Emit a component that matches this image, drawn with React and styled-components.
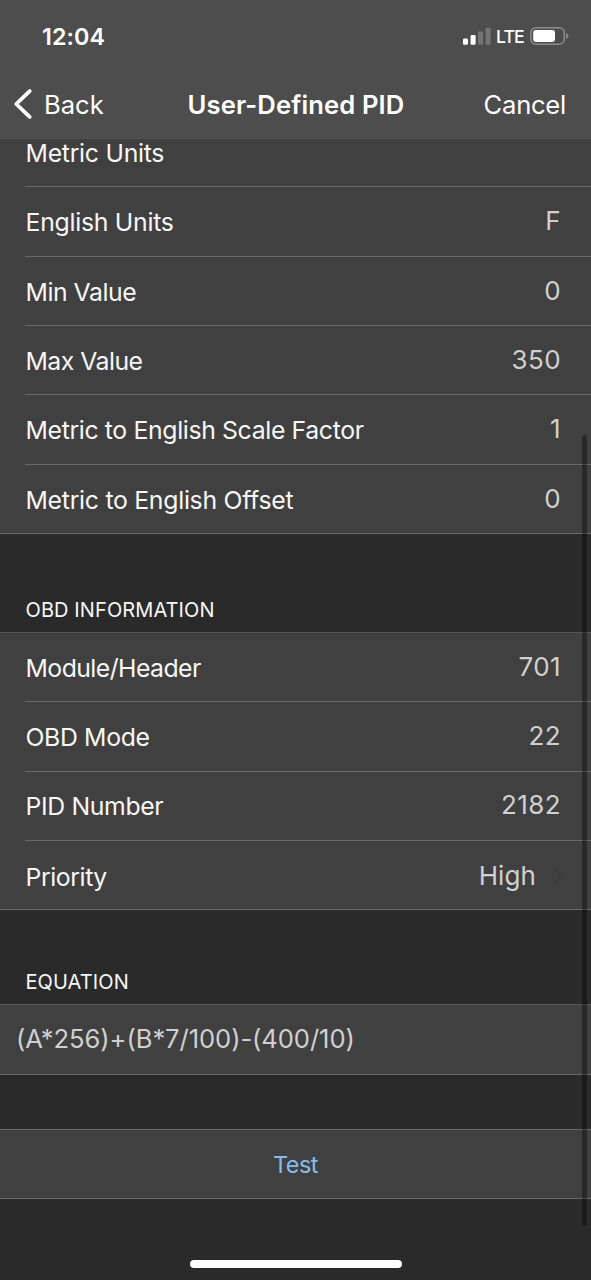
import React from "react";
import styled, { createGlobalStyle } from "styled-components";

const theme = {
    header: "#4d4d4d",
    page: "#2a2a2a",
    row: "#404040",
    line: "#6a6a6a",
    groupLine: "#585858",
    text: "#f7f7f7",
    value: "#d0d0d0",
    link: "#86bce8",
};

const GlobalStyle = createGlobalStyle`
    * {
        box-sizing: border-box;
    }
    body {
        margin: 0;
        background: ${theme.page};
        font-family: Inter, "Liberation Sans", sans-serif;
        font-feature-settings: "calt" 0;
    }
`;

const Screen = styled.div`
    position: relative;
    display: flex;
    flex-direction: column;
    width: 591px;
    height: 1280px;
    overflow: hidden;
    background: ${theme.page};
    color: ${theme.text};
`;

const Header = styled.header`
    flex: none;
    height: 139px;
    background: ${theme.header};
    border-bottom: 1px solid #545454;
    color: #fff;
`;

const StatusBar = styled.div`
    display: flex;
    align-items: center;
    height: 72px;
    padding: 0 22px 0 42px;
`;

const Clock = styled.div`
    flex: 1;
    font-size: 23.3px;
    font-weight: 600;
    letter-spacing: 0.1px;
`;

const Network = styled.div`
    width: 29px;
    margin: 1px 5px 0 5px;
    font-size: 17.8px;
    font-weight: 500;
    letter-spacing: -1px;
`;

const NavBar = styled.nav`
    display: grid;
    grid-template-columns: 1fr auto 1fr;
    align-items: center;
    height: 64px;
    padding: 0 25px 0 13px;
    font-size: 25.6px;
    h1 {
        margin: 0 0 0 13px;
        font-size: 25.6px;
        font-weight: 600;
        letter-spacing: 0.13px;
    }
`;

const NavButton = styled.button`
    display: flex;
    align-items: center;
    justify-self: ${(props) => (props.$end ? "end" : "start")};
    gap: 11px;
    padding: 0;
    border: 0;
    background: none;
    color: inherit;
    font: inherit;
    letter-spacing: ${(props) => (props.$end ? "-0.25px" : "0")};
`;

const Content = styled.main`
    flex: 1;
    overflow: hidden;
`;

const Group = styled.section`
    display: flex;
    flex-direction: column;
    height: ${(props) => props.$height}px;
    margin-top: ${(props) => props.$offset || 0}px;
    border-top: 1px solid ${(props) => props.$line || theme.line};
    background: ${theme.row};
`;

const GroupTitle = styled.h2`
    display: flex;
    align-items: flex-end;
    height: ${(props) => props.$height}px;
    margin: 0;
    padding: 0 25.5px 10px;
    font-size: 20px;
    font-weight: 400;
    line-height: 24px;
    letter-spacing: 0.1px;
`;

const RowBox = styled.div`
    display: flex;
    flex: 1 1 40px;
    padding-left: 25px;
    &:last-child {
        padding-left: 0;
        border-bottom: 1px solid ${theme.line};
    }
    &:last-child > div {
        padding-left: 25.5px;
        border-bottom: 0;
    }
`;

const RowInner = styled.div`
    display: flex;
    flex: 1;
    align-items: center;
    justify-content: space-between;
    padding-left: 0.5px;
    padding-right: ${(props) => (props.$link ? 28 : 30)}px;
    padding-top: ${(props) => (props.$link ? 2 : 0)}px;
    border-bottom: 1px solid ${theme.line};
`;

const Label = styled.span`
    padding-top: 1.5px;
    font-size: 24.8px;
    letter-spacing: ${(props) => props.$tracking}px;
`;

const Value = styled.span`
    display: flex;
    align-items: center;
    gap: 18px;
    padding-bottom: ${(props) => (props.$link ? 0 : 1.5)}px;
    color: ${theme.value};
    font-size: 26px;
    letter-spacing: ${(props) => (props.$link ? 0.1 : 0.4)}px;
`;

const Equation = styled.div`
    display: flex;
    flex: 1;
    align-items: center;
    padding: 0 16px 2px;
    border-bottom: 1px solid ${theme.line};
    color: ${theme.value};
    font-size: 25.6px;
    letter-spacing: -0.08px;
`;

const TestButton = styled.button`
    flex: 1;
    padding: 1px 0 0;
    border: 0;
    border-bottom: 1px solid ${theme.line};
    background: none;
    color: ${theme.link};
    font-family: inherit;
    font-size: 23.4px;
    letter-spacing: -0.5px;
`;

const ScrollThumb = styled.div`
    position: absolute;
    top: 435px;
    right: 4px;
    width: 5px;
    height: 791px;
    border-radius: 3px;
    background: rgba(0, 0, 0, 0.36);
`;

const HomeIndicator = styled.div`
    position: absolute;
    bottom: 12.5px;
    left: 190px;
    width: 211.5px;
    height: 8px;
    border-radius: 4px;
    background: #fff;
`;

const displayRows = [
    { label: "Metric Units", value: "", tracking: -0.27 },
    { label: "English Units", value: "F", tracking: -0.27 },
    { label: "Min Value", value: "0", tracking: -0.48 },
    { label: "Max Value", value: "350", tracking: -0.53 },
    { label: "Metric to English Scale Factor", value: "1", tracking: -0.36 },
    { label: "Metric to English Offset", value: "0", tracking: -0.28 },
];

const obdRows = [
    { label: "Module/Header", value: "701", tracking: -0.56 },
    { label: "OBD Mode", value: "22", tracking: -0.36 },
    { label: "PID Number", value: "2182", tracking: -0.36 },
    { label: "Priority", value: "High", tracking: -0.42, link: true },
];

function SignalIcon() {
    return (
        <svg width="28" height="18" viewBox="0 0 28 18">
            <rect x="0" y="11.5" width="5" height="6.2" rx="1.2" fill="#fff" />
            <rect x="7.6" y="8" width="5" height="9.7" rx="1.2" fill="#fff" />
            <rect x="15.1" y="4.5" width="5" height="13.2" rx="1.2" fill="#757575" />
            <rect x="22.6" y="0.7" width="5" height="17" rx="1.2" fill="#757575" />
        </svg>
    );
}

function BatteryIcon() {
    return (
        <svg width="39" height="18" viewBox="0 0 39 18">
            <rect x="0.9" y="0.8" width="33.4" height="16.4" rx="5" fill="none" stroke="#8c8c8c" strokeWidth="1.5" />
            <rect x="3.2" y="3.1" width="21.8" height="11.8" rx="2.8" fill="#fff" />
            <path d="M36.2 6v6c1.3-.5 2.1-1.7 2.1-3s-.8-2.5-2.1-3z" fill="#8c8c8c" />
        </svg>
    );
}

function BackIcon() {
    return (
        <svg width="20" height="32" viewBox="0 0 20 32" fill="none">
            <path d="M16.7 3.1 3.2 16l13.5 12.9" stroke="#fff" strokeWidth="3.8" strokeLinecap="round" strokeLinejoin="round" />
        </svg>
    );
}

function DisclosureIcon() {
    return (
        <svg width="9" height="18" viewBox="0 0 9 18" fill="none">
            <path d="m1.5 3 5.5 6-5.5 6" stroke="#3c3c3c" strokeWidth="2.5" strokeLinecap="round" />
        </svg>
    );
}

function Row({ label, value, tracking, link }) {
    return (
        <RowBox>
            <RowInner $link={link}>
                <Label $tracking={tracking}>{label}</Label>
                <Value $link={link}>
                    {value}
                    {link && <DisclosureIcon />}
                </Value>
            </RowInner>
        </RowBox>
    );
}

export default function App() {
    return (
        <Screen>
            <GlobalStyle />
            <Header>
                <StatusBar>
                    <Clock>12:04</Clock>
                    <SignalIcon />
                    <Network>LTE</Network>
                    <BatteryIcon />
                </StatusBar>
                <NavBar>
                    <NavButton>
                        <BackIcon />
                        Back
                    </NavButton>
                    <h1>User-Defined PID</h1>
                    <NavButton $end>Cancel</NavButton>
                </NavBar>
            </Header>
            <Content>
                <Group $height={417} $offset={-22}>
                    {displayRows.map((row) => (
                        <Row key={row.label} {...row} />
                    ))}
                </Group>
                <GroupTitle $height={98}>OBD INFORMATION</GroupTitle>
                <Group $height={278} $line={theme.groupLine}>
                    {obdRows.map((row) => (
                        <Row key={row.label} {...row} />
                    ))}
                </Group>
                <GroupTitle $height={94}>EQUATION</GroupTitle>
                <Group $height={71} $line={theme.groupLine}>
                    <Equation>(A*256)+(B*7/100)-(400/10)</Equation>
                </Group>
                <Group $height={70} $offset={54}>
                    <TestButton>Test</TestButton>
                </Group>
            </Content>
            <ScrollThumb />
            <HomeIndicator />
        </Screen>
    );
}
